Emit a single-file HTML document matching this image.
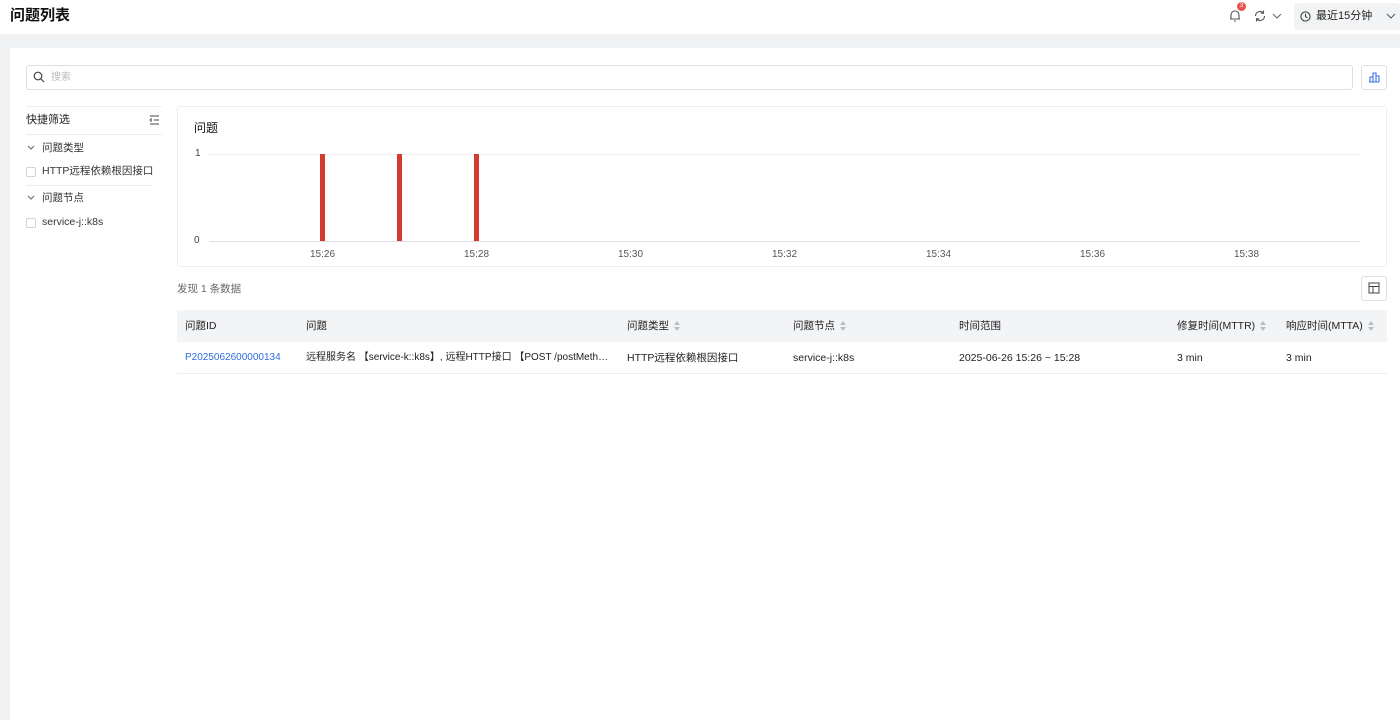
<!DOCTYPE html>
<html><head><meta charset="utf-8"><style>
*{box-sizing:border-box;margin:0;padding:0}
body{width:1400px;height:720px;overflow:hidden;background:#f0f1f3;font-family:"Liberation Sans","Noto Sans CJK SC",sans-serif;color:#222;font-size:12px;position:relative;line-height:1.2}
.top{position:absolute;left:0;top:0;width:1400px;height:34px;background:#fff}
.title{position:absolute;left:10px;top:7px;font-size:15px;font-weight:600;color:#111}
.main{position:absolute;left:10px;top:48px;width:1390px;height:672px;background:#fff}
.abs{position:absolute}
.search{position:absolute;left:26px;top:65px;width:1327px;height:25px;border:1px solid #dcdfe4;border-radius:3px}
.sbtn{position:absolute;left:1361px;top:65px;width:26px;height:25px;border:1px solid #dcdfe4;border-radius:3px}
.chk{position:absolute;width:10px;height:10px;border:1px solid #d0d3d8;border-radius:2px}
.chart{position:absolute;left:177px;top:106px;width:1210px;height:161px;border:1px solid #eceef1;border-radius:3px}
.th{position:absolute;top:310px;left:177px;width:1210px;height:32px;background:#f3f4f6}
.row{position:absolute;top:342px;left:177px;width:1210px;height:32px;border-bottom:1px solid #eceef1}
.c{position:absolute;top:9px;font-size:10.5px;line-height:14px;color:#222;white-space:nowrap}
.sort{display:inline-block;margin-left:5px;vertical-align:middle;width:7px;height:10px;position:relative}
.sort:before{content:"";position:absolute;left:0;top:0;border:3.5px solid transparent;border-bottom:4px solid #b8bcc3;border-top:0}
.sort:after{content:"";position:absolute;left:0;top:6px;border:3.5px solid transparent;border-top:4px solid #b8bcc3;border-bottom:0}
.bar{position:absolute;top:154px;width:5px;height:87px;background:#d33a30}
.xl{position:absolute;top:249px;font-size:10px;color:#555}
.lbl{position:absolute;font-size:10.5px;line-height:14px;color:#333;white-space:nowrap}
</style></head><body>
<div class="top"><div class="title">问题列表</div>
<svg class="abs" style="left:1228px;top:9px" width="14" height="14" viewBox="0 0 14 14" fill="none" stroke="#555" stroke-width="1.1"><path d="M3 10V6a4 4 0 018 0v4H3zM2 10h10M6 12h2"/></svg>
<div class="abs" style="left:1237px;top:2px;width:9px;height:9px;border-radius:50%;background:#e8534b;color:#fff;font-size:6px;text-align:center;line-height:9px">3</div>
<svg class="abs" style="left:1253px;top:9px" width="14" height="14" viewBox="0 0 14 14" fill="none" stroke="#555" stroke-width="1.1"><path d="M2.5 7a4.5 4.5 0 018-2.8M11.5 7a4.5 4.5 0 01-8 2.8M10.5 1.5v2.7H7.8M3.5 12.5V9.8h2.7"/></svg>
<svg class="abs" style="left:1272px;top:12px" width="10" height="8" viewBox="0 0 10 8" fill="none" stroke="#666"><path d="M1 2l4 4 4-4"/></svg>
<div class="abs" style="left:1294px;top:3px;width:106px;height:27px;background:#f2f3f5;border-radius:3px"></div>
<svg class="abs" style="left:1300px;top:11px" width="11" height="11" viewBox="0 0 12 12" fill="none" stroke="#333" stroke-width="1.1"><circle cx="6" cy="6" r="5"/><path d="M6 3v3l2 1.5"/></svg>
<div class="abs" style="left:1316px;top:9px;font-size:11px;line-height:14px;color:#222">最近15分钟</div>
<svg class="abs" style="left:1386px;top:12px" width="10" height="8" viewBox="0 0 10 8" fill="none" stroke="#555"><path d="M1 2l4 4 4-4"/></svg>
</div>
<div class="main"></div>
<div class="search"></div>
<svg class="abs" style="left:33px;top:71px" width="12" height="12" viewBox="0 0 12 12" fill="none" stroke="#444" stroke-width="1.2"><circle cx="5" cy="5" r="3.8"/><path d="M8 8l3 3"/></svg>
<div class="abs" style="left:51px;top:71px;font-size:10px;line-height:13px;color:#bbb">搜索</div>
<div class="sbtn"></div>
<svg class="abs" style="left:1368px;top:71px" width="12" height="12" viewBox="0 0 12 12" fill="none" stroke="#3b6fe0" stroke-width="1.1"><path d="M1 11h10M2 11V6h3v5M5 11V2h3v9M8 11V5h3v6"/></svg>
<div class="abs" style="left:26px;top:106px;width:136px;height:1px;background:#eceef1"></div>
<div class="lbl" style="left:26px;top:113px;font-size:11px;color:#222">快捷筛选</div>
<svg class="abs" style="left:149px;top:115px" width="11" height="10" viewBox="0 0 11 10" fill="none" stroke="#444"><path d="M1 1h9M5 5h5M1 9h9M3 3.5L1 5l2 1.5"/></svg>
<div class="abs" style="left:26px;top:134px;width:136px;height:1px;background:#eceef1"></div>
<svg class="abs" style="left:27px;top:145px" width="8" height="6" viewBox="0 0 8 6" fill="none" stroke="#666"><path d="M1 1l3 3 3-3"/></svg>
<div class="lbl" style="left:42px;top:141px">问题类型</div>
<div class="chk" style="left:26px;top:167px"></div>
<div class="lbl" style="left:42px;top:164px">HTTP远程依赖根因接口</div>
<div class="abs" style="left:26px;top:185px;width:126px;height:1px;background:#eceef1"></div>
<svg class="abs" style="left:27px;top:195px" width="8" height="6" viewBox="0 0 8 6" fill="none" stroke="#666"><path d="M1 1l3 3 3-3"/></svg>
<div class="lbl" style="left:42px;top:191px">问题节点</div>
<div class="chk" style="left:26px;top:218px"></div>
<div class="lbl" style="left:42px;top:215px">service-j::k8s</div>
<div class="chart"></div>
<div class="abs" style="left:194px;top:121px;font-size:12px;line-height:15px;color:#111">问题</div>
<div class="abs" style="left:195px;top:148px;font-size:10px;color:#444">1</div>
<div class="abs" style="left:194px;top:235px;font-size:10px;color:#444">0</div>
<div class="abs" style="left:209px;top:154px;width:1151px;height:1px;background:#eef0f2"></div>
<div class="abs" style="left:209px;top:241px;width:1151px;height:1px;background:#dcdfe3"></div>
<div class="bar" style="left:320px"></div><div class="bar" style="left:397px"></div><div class="bar" style="left:474px"></div>
<div class="xl" style="left:310px">15:26</div><div class="xl" style="left:464px">15:28</div><div class="xl" style="left:618px">15:30</div><div class="xl" style="left:772px">15:32</div><div class="xl" style="left:926px">15:34</div><div class="xl" style="left:1080px">15:36</div><div class="xl" style="left:1234px">15:38</div>
<div class="lbl" style="left:177px;top:282px;color:#666">发现 1 条数据</div>
<div class="abs" style="left:1361px;top:276px;width:26px;height:25px;border:1px solid #dcdfe4;border-radius:3px"></div>
<svg class="abs" style="left:1368px;top:282px" width="12" height="12" viewBox="0 0 12 12" fill="none" stroke="#444"><rect x="1" y="1" width="10" height="10"/><path d="M1 4.5h10M5 4.5V11"/></svg>
<div class="th">
<div class="c" style="left:8px">问题ID</div><div class="c" style="left:129px">问题</div>
<div class="c" style="left:450px">问题类型<span class="sort"></span></div>
<div class="c" style="left:616px">问题节点<span class="sort"></span></div>
<div class="c" style="left:782px">时间范围</div>
<div class="c" style="left:1000px">修复时间(MTTR)<span class="sort"></span></div>
<div class="c" style="left:1109px">响应时间(MTTA)<span class="sort"></span></div>
</div>
<div class="row">
<div class="c" style="left:8px;color:#2f6ee0;font-size:10px">P2025062600000134</div>
<div class="c" style="left:129px;width:306px;overflow:hidden;text-overflow:ellipsis;font-size:10px">远程服务名 【service-k::k8s】, 远程HTTP接口 【POST /postMethod/call</div>
<div class="c" style="left:450px">HTTP远程依赖根因接口</div>
<div class="c" style="left:616px">service-j::k8s</div>
<div class="c" style="left:782px">2025-06-26 15:26 ~ 15:28</div>
<div class="c" style="left:1000px">3 min</div>
<div class="c" style="left:1109px">3 min</div>
</div>
</body></html>
